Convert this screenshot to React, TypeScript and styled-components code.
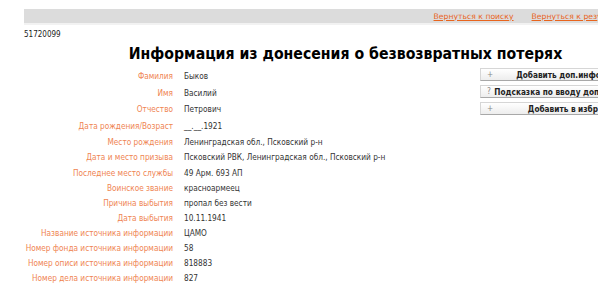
import React from "react";
import styled, { createGlobalStyle } from "styled-components";

const Global = createGlobalStyle`
  html, body {
    margin: 0;
    padding: 0;
    background: #fff;
    overflow: hidden;
  }
  body {
    font-family: "DejaVu Sans Condensed", "DejaVu Sans", Tahoma, sans-serif;
  }
`;

const s = {
  Page: styled.div`
    width: 647px;
    margin-left: 24px;
    padding-top: 9px;
  `,
  TopBar: styled.div`
    display: flex;
    justify-content: flex-end;
    align-items: center;
    gap: 18px;
    height: 14px;
    padding-right: 5px;
    background: #dcdcdc;
    border-bottom: 2px solid #f2f2f2;
  `,
  BackLink: styled.a`
    font-family: "DejaVu Sans", Verdana, sans-serif;
    font-size: 7.7px;
    color: #e8651e;
    text-decoration: underline;
    cursor: pointer;
    white-space: nowrap;
  `,
  RecordId: styled.div`
    margin-top: 5px;
    font-size: 8px;
    color: #222;
  `,
  Title: styled.h1`
    margin: 5px 0 0 0;
    padding-right: 4px;
    text-align: center;
    font-size: 15.7px;
    font-weight: bold;
    color: #000;
  `,
  Body: styled.div`
    display: flex;
    justify-content: space-between;
    align-items: flex-start;
    margin-top: 5px;
  `,
  Table: styled.div`
    display: grid;
    grid-template-columns: 149px auto;
    column-gap: 11px;
    width: 420px;
    border-bottom: 1px solid #e6e6e6;
  `,
  Label: styled.div<{ $h: number }>`
    height: ${p => p.$h}px;
    display: flex;
    align-items: center;
    justify-content: flex-end;
    font-size: 8.2px;
    color: #ef8452;
    white-space: nowrap;
  `,
  Value: styled.div<{ $h: number }>`
    height: ${p => p.$h}px;
    display: flex;
    align-items: center;
    font-size: 8.2px;
    color: #333;
    white-space: nowrap;
  `,
  Actions: styled.div`
    display: flex;
    flex-direction: column;
    gap: 4px;
    width: 191px;
  `,
  ActionButton: styled.div`
    position: relative;
    display: flex;
    align-items: center;
    justify-content: center;
    height: 11px;
    border: 1px solid #d6d6d6;
    border-bottom-color: #a8a8a8;
    background: linear-gradient(#ffffff, #ededed);
    font-size: 8.2px;
    font-weight: bold;
    color: #222;
    white-space: nowrap;
  `,
  ActionIcon: styled.span`
    position: absolute;
    left: 6px;
    top: 0;
    font-weight: normal;
    color: #888;
  `
};

const rows: [string, string][] = [
  ["Фамилия", "Быков"],
  ["Имя", "Василий"],
  ["Отчество", "Петрович"],
  ["Дата рождения/Возраст", "__.__.1921"],
  ["Место рождения", "Ленинградская обл., Псковский р-н"],
  ["Дата и место призыва", "Псковский РВК, Ленинградская обл., Псковский р-н"],
  ["Последнее место службы", "49 Арм. 693 АП"],
  ["Воинское звание", "красноармеец"],
  ["Причина выбытия", "пропал без вести"],
  ["Дата выбытия", "10.11.1941"],
  ["Название источника информации", "ЦАМО"],
  ["Номер фонда источника информации", "58"],
  ["Номер описи источника информации", "818883"],
  ["Номер дела источника информации", "827"]
];

const heights = [16, 17, 16, 17, 15, 16, 15, 15, 15, 15, 15, 15, 15, 16];

const actions = [
  { icon: "+", text: "Добавить доп.информацию" },
  { icon: "?", text: "Подсказка по вводу доп.информации" },
  { icon: "+", text: "Добавить в избранное" }
];

const App: React.FC = () => {
  return (
    <>
      <Global />
      <s.Page>
        <s.TopBar>
          <s.BackLink>Вернуться к поиску</s.BackLink>
          <s.BackLink>Вернуться к результатам поиска</s.BackLink>
        </s.TopBar>
        <s.RecordId>51720099</s.RecordId>
        <s.Title>Информация из донесения о безвозвратных потерях</s.Title>
        <s.Body>
          <s.Table>
            {rows.map(([label, value], i) => (
              <React.Fragment key={label}>
                <s.Label $h={heights[i]}>{label}</s.Label>
                <s.Value $h={heights[i]}>{value}</s.Value>
              </React.Fragment>
            ))}
          </s.Table>
          <s.Actions>
            {actions.map(a => (
              <s.ActionButton key={a.text}>
                <s.ActionIcon>{a.icon}</s.ActionIcon>
                {a.text}
              </s.ActionButton>
            ))}
          </s.Actions>
        </s.Body>
      </s.Page>
    </>
  );
};

export default App;
